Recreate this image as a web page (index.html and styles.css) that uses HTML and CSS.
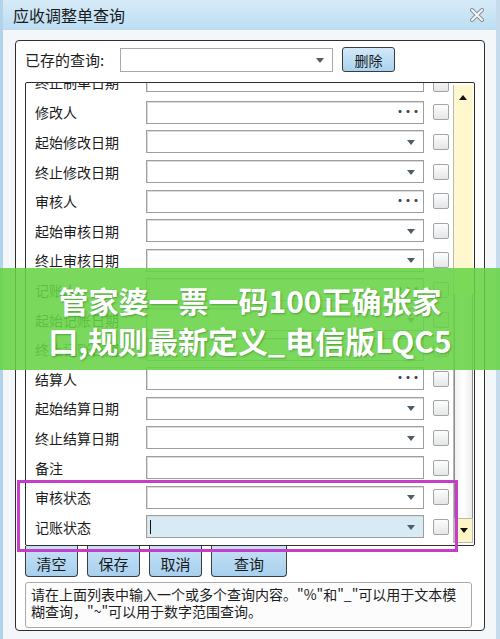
FILE: index.html
```html
<!DOCTYPE html>
<html lang="zh-CN">
<head>
    <meta charset="UTF-8">
    <meta name="viewport" content="width=device-width, initial-scale=1.0">
    <title>应收调整单查询</title>
    <link rel="stylesheet" href="styles.css">
</head>
<body>
<div class="window">
    <div class="titlebar">
        <span class="title">应收调整单查询</span>
        <svg class="close" width="14" height="14" viewBox="0 0 14 14">
            <path d="M2 2 L12 12 M12 2 L2 12" stroke="#8a9099" stroke-width="4" stroke-linecap="round"/>
            <path d="M2 2 L12 12 M12 2 L2 12" stroke="#f4f8fb" stroke-width="2" stroke-linecap="round"/>
        </svg>
    </div>
    <div class="panel">
        <div class="saved">
            <span class="saved-label">已存的查询:</span>
            <div class="combo"><span class="arrow"></span></div>
            <button class="btn-delete">删除</button>
        </div>
        <div class="list">
            <div class="rows">
                <div class="row first"><span class="label">终止制单日期</span><div class="field"><span class="arrow"></span></div><span class="check"></span></div>
                <div class="row"><span class="label">修改人</span><div class="field"><span class="dots">···</span></div><span class="check"></span></div>
                <div class="row"><span class="label">起始修改日期</span><div class="field"><span class="arrow"></span></div><span class="check"></span></div>
                <div class="row"><span class="label">终止修改日期</span><div class="field"><span class="arrow"></span></div><span class="check"></span></div>
                <div class="row"><span class="label">审核人</span><div class="field"><span class="dots">···</span></div><span class="check"></span></div>
                <div class="row"><span class="label">起始审核日期</span><div class="field"><span class="arrow"></span></div><span class="check"></span></div>
                <div class="row"><span class="label">终止审核日期</span><div class="field"><span class="arrow"></span></div><span class="check"></span></div>
                <div class="row"><span class="label">记账人</span><div class="field"><span class="dots">···</span></div><span class="check"></span></div>
                <div class="row"><span class="label">起始记账日期</span><div class="field"><span class="arrow"></span></div><span class="check"></span></div>
                <div class="row"><span class="label">终止记账日期</span><div class="field"><span class="arrow"></span></div><span class="check"></span></div>
                <div class="row"><span class="label">结算人</span><div class="field"><span class="dots">···</span></div><span class="check"></span></div>
                <div class="row"><span class="label">起始结算日期</span><div class="field"><span class="arrow"></span></div><span class="check"></span></div>
                <div class="row"><span class="label">终止结算日期</span><div class="field"><span class="arrow"></span></div><span class="check"></span></div>
                <div class="row"><span class="label">备注</span><div class="field"></div><span class="check"></span></div>
                <div class="row"><span class="label">审核状态</span><div class="field"><span class="arrow"></span></div><span class="check"></span></div>
                <div class="row"><span class="label">记账状态</span><div class="field active"><span class="caret"></span><span class="arrow"></span></div><span class="check"></span></div>
            </div>
            <div class="scrollbar">
                <div class="scroll-track"><span class="up"></span></div>
                <div class="scroll-thumb"></div>
                <div class="scroll-down"><span class="down"></span></div>
            </div>
        </div>
        <div class="actions">
            <button class="btn" style="width:53px">清空</button>
            <button class="btn" style="width:53px">保存</button>
            <button class="btn" style="width:53px">取消</button>
            <button class="btn" style="width:76px">查询</button>
        </div>
        <div class="help">请在上面列表中输入一个或多个查询内容。"%"和"_"可以用于文本模<br>糊查询，"~"可以用于数字范围查询。</div>
    </div>
    <div class="highlight"></div>
    <div class="banner">
        <p>管家婆一票一码100正确张家</p>
        <p>口,规则最新定义_电信版LQC5</p>
    </div>
</div>
</body>
</html>
```

FILE: styles.css
```css
body {
    margin: 0;
    padding: 0;
    font-family: "Noto Sans CJK SC", "Noto Sans", sans-serif;
    color: #1c1c1c;
    background-color: #f3f6f9;
    overflow: hidden;
}
.window {
    position: relative;
    width: 500px;
    height: 639px;
    box-sizing: border-box;
    border-left: 3px solid #b3d3ea;
    border-right: 4px solid #c6dcec;
    background: #f4f7fa;
}
.titlebar {
    height: 30px;
    display: flex;
    align-items: center;
    justify-content: space-between;
    padding: 0 12px 0 10px;
    background: linear-gradient(#d6eaf7, #bddef3);
    border-bottom: 1px solid #c4dbeb;
    box-sizing: border-box;
}
.title {
    font-size: 16px;
    color: #1a1a1a;
}
.panel {
    margin: 10px 11px 0 12px;
    height: 591px;
    box-sizing: border-box;
    border: 1px solid #2e2e2e;
    border-radius: 4px;
    background: #ffffff;
    padding: 6px 9px 0 9px;
}
.saved {
    display: flex;
    align-items: center;
    height: 25px;
}
.saved-label {
    width: 95px;
    font-size: 15px;
}
.combo {
    width: 213px;
    height: 24px;
    box-sizing: border-box;
    border: 1px solid #a8a8a8;
    position: relative;
    background: #fff;
}
.arrow {
    position: absolute;
    right: 8px;
    top: 50%;
    margin-top: -2px;
    border-left: 4px solid transparent;
    border-right: 4px solid transparent;
    border-top: 5px solid #4f5d6b;
}
.btn-delete {
    margin-left: 9px;
    width: 53px;
    height: 25px;
    font-family: inherit;
    font-size: 14px;
    color: #1a1a1a;
    background: linear-gradient(#d3e9f8, #a9d2ef);
    border: 1px solid #3c3c3c;
    border-radius: 3px;
    padding: 0;
}
.list {
    margin-top: 10px;
    height: 464px;
    box-sizing: border-box;
    border: 1px solid #2e2e2e;
    border-radius: 2px;
    display: flex;
    overflow: hidden;
}
.rows {
    flex: 1;
    padding-left: 9px;
    overflow: hidden;
}
.row {
    height: 29.6px;
    display: flex;
    align-items: center;
}
.row.first {
    margin-top: -15px;
    align-items: flex-end;
    padding-bottom: 6px;
    box-sizing: border-box;
}
.label {
    width: 111px;
    font-size: 14px;
    white-space: nowrap;
}
.field {
    position: relative;
    width: 278px;
    height: 23px;
    box-sizing: border-box;
    border: 1px solid #9e9e9e;
    box-shadow: inset 1px 1px 0 #dcdcdc;
    background: #ffffff;
}
.field.active {
    background: #d8eaf4;
}
.caret {
    position: absolute;
    left: 3px;
    top: 4px;
    width: 1px;
    height: 14px;
    background: #111;
}
.dots {
    position: absolute;
    right: 5px;
    top: 0;
    line-height: 20px;
    font-size: 12px;
    font-weight: bold;
    color: #3d4754;
    letter-spacing: -4px;
}
.check {
    margin-left: 9px;
    width: 16px;
    height: 16px;
    box-sizing: border-box;
    border: 1px solid #a4a4a4;
    border-radius: 2px;
    background: linear-gradient(#fdfdfd, #e4e6e8);
}
.scrollbar {
    width: 19px;
    margin: 2px 1px 2px 0;
    display: flex;
    flex-direction: column;
    border-left: 1px solid #b9b9b9;
}
.scroll-track {
    height: 209px;
    background: #fff8cf;
    position: relative;
}
.up {
    position: absolute;
    left: 5px;
    top: 10px;
    border-left: 4px solid transparent;
    border-right: 4px solid transparent;
    border-bottom: 5px solid #111;
}
.scroll-thumb {
    flex: 1;
    background: linear-gradient(90deg, #f2f2f2, #ffffff, #ececec);
    border-left: 1px solid #8c8c8c;
    border-right: 1px solid #8c8c8c;
}
.scroll-down {
    height: 23px;
    background: #fff6c6;
    border: 1px solid #b9b9b9;
    position: relative;
}
.down {
    position: absolute;
    left: 5px;
    top: 9px;
    border-left: 4px solid transparent;
    border-right: 4px solid transparent;
    border-top: 5px solid #111;
}
.actions {
    display: flex;
    gap: 9px;
}
.btn {
    height: 31px;
    padding: 4px 0 0 0;
    font-family: inherit;
    font-size: 15px;
    color: #1a1a1a;
    background: linear-gradient(#c6e2f6, #a7d0ee);
    border: 1px solid #3c3c3c;
    border-top: none;
    border-radius: 0 0 4px 4px;
}
.help {
    margin-top: 5px;
    width: 447px;
    height: 46px;
    box-sizing: border-box;
    border: 1px solid #a9a9a9;
    border-radius: 3px;
    padding: 3px 4px 0 5px;
    font-size: 14px;
    line-height: 17px;
    background: #fcfcfc;
    white-space: nowrap;
}
.highlight {
    position: absolute;
    left: 14px;
    top: 480px;
    width: 441px;
    height: 72px;
    box-sizing: border-box;
    border: 3px solid #c43ec8;
}
.banner {
    position: absolute;
    left: -3px;
    top: 268px;
    width: 500px;
    height: 102px;
    box-sizing: border-box;
    padding-top: 12px;
    background: rgba(104, 212, 70, 0.88);
    text-align: center;
}
.banner p {
    margin: 0;
    font-size: 30px;
    line-height: 40px;
    font-weight: bold;
    color: #ffffff;
    text-shadow: 1px 1px 2px rgba(0, 60, 0, 0.35);
    white-space: nowrap;
}
```
